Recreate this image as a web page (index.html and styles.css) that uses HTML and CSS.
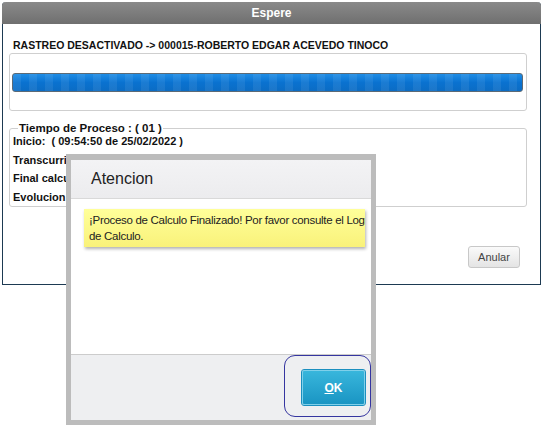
FILE: index.html
```html
<!DOCTYPE html>
<html>
<head>
<meta charset="utf-8">
<link rel="stylesheet" href="styles.css">
</head>
<body>
<div class="window">
  <div class="titlebar">Espere</div>
  <div class="wbody">
    <div class="status">RASTREO DESACTIVADO -&gt; 000015-ROBERTO EDGAR ACEVEDO TINOCO</div>
    <div class="progbox"><div class="bar"></div></div>
    <fieldset class="fs">
      <legend>Tiempo de Proceso : ( 01 )</legend>
      <div class="line">Inicio:&nbsp; ( 09:54:50 de 25/02/2022 )</div>
      <div class="line">Transcurrido:</div>
      <div class="line">Final calculado:</div>
      <div class="line">Evolucion:</div>
    </fieldset>
    <div class="actions"><button class="btn">Anular</button></div>
  </div>
</div>
<div class="dialog">
  <div class="dhead">Atencion</div>
  <div class="dcontent">
    <div class="note">¡Proceso de Calculo Finalizado! Por favor consulte el Log<br>de Calculo.</div>
  </div>
  <div class="dfoot">
    <div class="focusring"><button class="ok"><u>O</u>K</button></div>
  </div>
</div>
</body>
</html>
```
FILE: styles.css
```css
html, body { margin: 0; padding: 0; background: #fff; }
body { font-family: "Liberation Sans", Arial, sans-serif; position: relative; width: 544px; height: 427px; overflow: hidden; }

.window {
  margin: 2px 0 0 2px;
  width: 539px;
  height: 283px;
  border: 1px solid #1d3a52;
  border-top: none;
  border-radius: 4px 4px 0 0;
  box-sizing: border-box;
  display: flex;
  flex-direction: column;
}
.titlebar {
  height: 22px;
  background: linear-gradient(#8a8a8a, #6f6f6f);
  color: #fff;
  font-weight: bold;
  font-size: 12px;
  line-height: 22px;
  text-align: center;
  border-radius: 4px 4px 0 0;
  margin: 0 -1px;
}
.wbody { padding: 0 13px 0 6px; display: flex; flex-direction: column; }
.status {
  font-size: 10.5px;
  font-weight: bold;
  color: #111;
  padding: 14px 0 0 4px;
  height: 14px;
  line-height: 14px;
}
.progbox {
  margin-top: 1px;
  height: 58px;
  border: 1px solid #cfcfcf;
  border-radius: 3px;
  box-sizing: border-box;
  display: flex;
  align-items: center;
  padding: 0 3px 0 2px;
}
.bar {
  flex: 1;
  height: 19px;
  box-sizing: border-box;
  border: 1px solid #5c6a76;
  border-radius: 3px;
  background:
    repeating-linear-gradient(90deg, rgba(255,255,255,0.07) 0 8px, rgba(0,0,0,0) 8px 16px),
    linear-gradient(#1f8de6, #0a72d0 50%, #0b6cc4);
}
.fs {
  margin: 12px 0 0 0;
  padding: 0 0 5px 3px;
  border: 1px solid #cfcfcf;
  border-radius: 3px;
  height: 84px;
  box-sizing: border-box;
}
.fs legend {
  font-size: 11.5px;
  color: #111;
  padding: 0 1px;
  margin-left: 5px;
  font-weight: bold;
  line-height: 11px;
}
.line {
  font-size: 11px;
  font-weight: bold;
  color: #111;
  height: 18.5px;
  line-height: 14px;
}
.actions { display: flex; justify-content: flex-end; margin-top: 39px; padding-right: 7px; }
.btn {
  width: 52px;
  height: 22px;
  font-family: "Liberation Sans", Arial, sans-serif;
  font-size: 11px;
  color: #444;
  background: linear-gradient(#fafafa, #e4e4e4);
  border: 1px solid #c8c8c8;
  border-radius: 3px;
  padding: 0;
}

.dialog {
  position: absolute;
  left: 66px;
  top: 154px;
  width: 310px;
  height: 271px;
  box-sizing: border-box;
  border: 5px solid #bcbcbc;
  border-top-width: 6px;
  background: #fff;
  display: flex;
  flex-direction: column;
}
.dhead {
  height: 39px;
  background: linear-gradient(#f3f3f5, #ececee);
  border-bottom: 1px solid #d9d9d9;
  box-sizing: border-box;
  font-size: 16px;
  color: #222;
  padding-left: 20px;
  line-height: 38px;
}
.dcontent { flex: 1; padding: 10px 6px 0 13px; }
.note {
  background: linear-gradient(#ffff9a, #f9f27a);
  box-shadow: 1px 2px 3px rgba(0,0,0,0.3);
  font-size: 11.5px;
  letter-spacing: -0.3px;
  white-space: nowrap;
  color: #222;
  line-height: 16px;
  padding: 3px 0 3px 5px;
  height: 38px;
  box-sizing: border-box;
}
.dfoot {
  height: 66px;
  background: #eeeff1;
  border-top: 1px solid #cccccc;
  box-sizing: border-box;
  display: flex;
  justify-content: flex-end;
  align-items: flex-start;
}
.focusring {
  width: 87px;
  height: 62px;
  box-sizing: border-box;
  border: 1.5px solid #3535a0;
  border-radius: 11px;
  padding: 14px 4px 0 17px;
}
.ok {
  width: 63px;
  height: 35px;
  padding: 0;
  background: linear-gradient(#38b6dc, #1a95c3);
  border: 1px solid #7fd0ea;
  outline: 1px solid #1b8fbf;
  border-radius: 2px;
  color: #fff;
  font-family: "Liberation Sans", Arial, sans-serif;
  font-weight: bold;
  font-size: 12px;
}
```
